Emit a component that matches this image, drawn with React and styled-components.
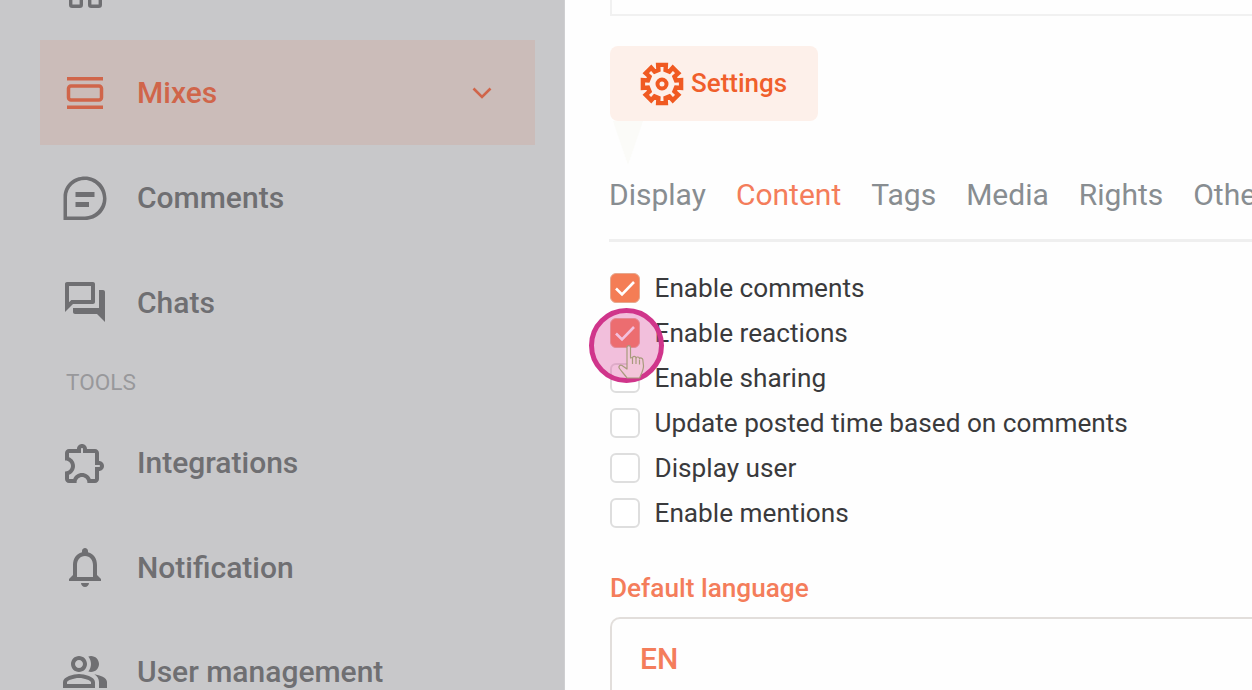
import React from 'react'
import styled, { createGlobalStyle } from 'styled-components'

const Global = createGlobalStyle`
  html, body {
    margin: 0;
    padding: 0;
    height: 690px;
    overflow: hidden;
    background: #fefefe;
  }
  * {
    box-sizing: border-box;
  }
`

const Page = styled.div`
  display: flex;
  position: relative;
  width: 1252px;
  height: 690px;
  overflow: hidden;
  font-family: Roboto, 'Liberation Sans', sans-serif;
`

const Sidebar = styled.aside`
  flex: 0 0 565px;
  height: 690px;
  padding: 0 29px 0 40px;
  overflow: hidden;
  background: #c8c8ca;
  border-right: 1px solid #cfcfd1;
`

const Nav = styled.nav`
  margin-top: -64.3px;
`

const NavRow = styled.div`
  display: flex;
  align-items: center;
  height: 104.67px;
  padding: 0 43px 0 20.5px;
  gap: 28.5px;
  font-size: 30px;
  font-weight: 500;
  color: ${({ $active }) => ($active ? '#d0654a' : '#6f6f72')};
  background: ${({ $active }) => ($active ? '#cbbcb9' : 'transparent')};
`

const NavLabel = styled.span`
  flex: 1;
`

const SectionTitle = styled.div`
  display: flex;
  align-items: center;
  height: 56px;
  padding-left: 26px;
  font-size: 22.6px;
  color: #98989b;
`

const IconBox = styled.svg`
  flex: 0 0 48px;
  width: 48px;
  height: 48px;
  fill: currentColor;
`

const Main = styled.main`
  flex: 1;
  min-width: 0;
  padding-left: 45px;
`

const TopCard = styled.div`
  height: 16px;
  border-left: 2px solid #f1f1f1;
  border-bottom: 2px solid #f1f1f1;
`

const SettingsBadge = styled.div`
  display: flex;
  align-items: center;
  gap: 7px;
  width: 208px;
  height: 75px;
  margin-top: 30px;
  padding: 0 0 2px 30px;
  border-radius: 8px;
  background: #fdf0ea;
  font-size: 26px;
  font-weight: 500;
  color: #f05f2c;

  svg {
    margin-top: 2px;
  }
`

const Pointer = styled.div`
  width: 0;
  height: 0;
  margin-left: 3px;
  border-left: 15px solid transparent;
  border-right: 15px solid transparent;
  border-top: 44px solid #fbfbf8;
`

const Tabs = styled.div`
  display: flex;
  gap: 30px;
  height: 77px;
  margin-left: -1px;
  border-bottom: 3px solid #efefef;
  white-space: nowrap;
  overflow: hidden;
`

const Tab = styled.div`
  height: 77px;
  padding-top: 10px;
  font-size: 30px;
  line-height: 40px;
  font-weight: 400;
  color: ${({ $active }) => ($active ? '#f47d5b' : '#888d91')};
  border-bottom: ${({ $active }) => ($active ? '3px solid #f47d5b' : '3px solid transparent')};
`

const Options = styled.div`
  display: flex;
  flex-direction: column;
  margin-top: 24px;
`

const Option = styled.label`
  display: flex;
  align-items: center;
  gap: 14.5px;
  height: 44.9px;
  font-size: 26.2px;
  color: #3a3a3c;
`

const Box = styled.span`
  display: flex;
  align-items: center;
  justify-content: center;
  width: 30px;
  height: 30px;
  border-radius: 6px;
  background: ${({ $checked }) => ($checked ? '#f47d55' : '#fff')};
  border: ${({ $checked }) => ($checked ? '1px solid #e6a98f' : '2px solid #dedede')};
`

const FieldTitle = styled.div`
  margin-top: 38px;
  font-size: 26.2px;
  line-height: 30px;
  font-weight: 500;
  color: #f47d5b;
`

const Select = styled.div`
  height: 120px;
  margin-top: 14px;
  padding: 20px 28px;
  border: 2px solid #e2dedb;
  border-right: 0;
  border-bottom: 0;
  border-radius: 10px 0 0 0;
  font-size: 30px;
  line-height: 40px;
  font-weight: 500;
  color: #f47d5b;
`

const ClickMark = styled.div`
  position: absolute;
  left: 588.5px;
  top: 307.5px;
  width: 75px;
  height: 75px;
  border-radius: 50%;
  background: rgba(222, 80, 160, 0.36);
  border: 5px solid #d0358b;
`

const Hand = styled.svg`
  position: absolute;
  left: 618px;
  top: 345px;
  width: 27px;
  height: 34px;
`

const DashboardIcon = () => (
  <IconBox viewBox="0 0 48 48">
    <g fill="none" stroke="#6f6f72" strokeWidth="3.4">
      <rect x="9.7" y="26" width="10.6" height="16.300" rx="1.5" />
      <rect x="28.700" y="26" width="10.6" height="16.300" rx="1.5" />
    </g>
  </IconBox>
)

const MixesIcon = () => (
  <IconBox viewBox="0 0 48 48">
    <path d="M6 8h36v3.500H6zM6 36.500h36V40H6z" />
    <rect x="7.500" y="17" width="33" height="14" rx="2.500" fill="none" stroke="currentColor" strokeWidth="3.500" />
  </IconBox>
)

const CommentIcon = () => (
  <IconBox viewBox="0 0 48 48">
    <path
      d="M2.500 47V24C2.500 12 12 3.500 24 3.500S45.500 13 45.500 25.500 36 47 24 47zM6 43.500H24C33.500 43.500 42 35 42 25.500S33.500 7 24 7 6 14 6 24z"
      fillRule="evenodd"
    />
    <path d="M14.500 19h19v5h-19zM14.500 29h13.500v5H14.500z" />
  </IconBox>
)

const ChatsIcon = () => (
  <IconBox viewBox="0 0 24 24">
    <path d="M15 4v7H5.170L4 12.170V4h11m1-2H3c-.550 0-1 .450-1 1v14l4-4h10c.550 0 1-.450 1-1V3c0-.550-.450-1-1-1zm5 4h-2v9H6v2c0 .550.450 1 1 1h11l4 4V7c0-.550-.450-1-1-1z" />
  </IconBox>
)

const PuzzleIcon = () => (
  <IconBox viewBox="0 0 24 24">
    <path d="M10.500 4.500c.280 0 .500.220.500.500v2h6v6h2c.280 0 .500.220.500.500s-.220.500-.500.500h-2v6h-2.120c-.680-1.750-2.390-3-4.380-3s-3.700 1.250-4.380 3H4v-2.120c1.750-.680 3-2.390 3-4.380 0-1.990-1.240-3.700-2.990-4.380L4 7h6V5c0-.280.220-.500.500-.500m0-2C9.120 2.500 8 3.620 8 5H4c-1.100 0-1.990.900-1.990 2v3.800h.290c1.490 0 2.700 1.210 2.700 2.700s-1.210 2.700-2.700 2.700H2V20c0 1.100.900 2 2 2h3.800v-.300c0-1.490 1.210-2.700 2.700-2.700s2.700 1.210 2.700 2.700v.300H17c1.100 0 2-.900 2-2v-4c1.380 0 2.500-1.120 2.500-2.500S20.380 11 19 11V7c0-1.100-.900-2-2-2h-4c0-1.380-1.120-2.500-2.500-2.500z" />
  </IconBox>
)

const BellIcon = () => (
  <IconBox viewBox="0 0 24 24">
    <path d="M12 22c1.100 0 2-.900 2-2h-4c0 1.100.900 2 2 2zm6-6v-5c0-3.070-1.630-5.640-4.500-6.320V4c0-.830-.670-1.500-1.500-1.500s-1.500.670-1.500 1.500v.680C7.640 5.360 6 7.920 6 11v5l-2 2v1h16v-1l-2-2zm-2 1H8v-6c0-2.480 1.510-4.500 4-4.500s4 2.020 4 4.500v6z" />
  </IconBox>
)

const UsersIcon = () => (
  <IconBox viewBox="0 0 24 24">
    <path d="M16.670 13.130C18.040 14.060 19 15.320 19 17v3h4v-3c0-2.180-3.570-3.470-6.330-3.870z" />
    <path d="M15 12c2.210 0 4-1.790 4-4s-1.790-4-4-4c-.470 0-.910.100-1.330.240C14.500 5.270 15 6.580 15 8s-.500 2.730-1.330 3.760c.420.140.860.240 1.330.240z" />
    <path d="M9 12c2.210 0 4-1.790 4-4s-1.790-4-4-4-4 1.790-4 4 1.790 4 4 4zm0-6c1.100 0 2 .900 2 2s-.900 2-2 2-2-.900-2-2 .900-2 2-2z" />
    <path d="M9 13c-2.670 0-8 1.340-8 4v3h16v-3c0-2.660-5.330-4-8-4zm6 5H3v-.990C3.200 16.290 6.300 15 9 15s5.800 1.290 6 2z" />
  </IconBox>
)

const Chevron = () => (
  <svg width="20" height="12" viewBox="0 0 20 12" fill="none" stroke="currentColor" strokeWidth="2.600">
    <path d="M1.500 1.500L10 10l8.500-8.500" />
  </svg>
)

// eight chunky teeth, the outline is worked out from the angles
const gearPath = () => {
  const teeth = 8
  const points = []
  for (let i = 0; i < teeth; i++) {
    const mid = (i * 2 * Math.PI) / teeth
    const offsets = [
      [-0.25, 14.5],
      [-0.2, 19.5],
      [0.2, 19.5],
      [0.25, 14.5],
    ]
    offsets.forEach(([da, r]) => {
      const a = mid + da
      points.push(`${(22 + r * Math.sin(a)).toFixed(2)} ${(22 - r * Math.cos(a)).toFixed(2)}`)
    })
  }
  return `M${points.join('L')}Z`
}

const GearIcon = () => (
  <svg width="44" height="44" viewBox="0 0 44 44" fill="none" stroke="#f05a22" strokeWidth="4.400" strokeLinejoin="miter">
    <path d={gearPath()} />
    <circle cx="22" cy="22" r="4.500" strokeWidth="4" />
  </svg>
)

const CheckMark = () => (
  <svg width="22" height="18" viewBox="0 0 22 18" fill="none" stroke="#fff" strokeWidth="2.600">
    <path d="M2 9.500l6 6L20 3" />
  </svg>
)

const options = [
  ['Enable comments', true],
  ['Enable reactions', true],
  ['Enable sharing', false],
  ['Update posted time based on comments', false],
  ['Display user', false],
  ['Enable mentions', false],
]

const tabs = ['Display', 'Content', 'Tags', 'Media', 'Rights', 'Other']

const App = () => (
  <Page>
    <Global />
    <Sidebar>
      <Nav>
        <NavRow>
          <DashboardIcon />
        </NavRow>
        <NavRow $active>
          <MixesIcon />
          <NavLabel>Mixes</NavLabel>
          <Chevron />
        </NavRow>
        <NavRow>
          <CommentIcon />
          <NavLabel>Comments</NavLabel>
        </NavRow>
        <NavRow>
          <ChatsIcon />
          <NavLabel>Chats</NavLabel>
        </NavRow>
        <SectionTitle>TOOLS</SectionTitle>
        <NavRow>
          <PuzzleIcon />
          <NavLabel>Integrations</NavLabel>
        </NavRow>
        <NavRow>
          <BellIcon />
          <NavLabel>Notification</NavLabel>
        </NavRow>
        <NavRow>
          <UsersIcon />
          <NavLabel>User management</NavLabel>
        </NavRow>
      </Nav>
    </Sidebar>
    <Main>
      <TopCard />
      <SettingsBadge>
        <GearIcon />
        Settings
      </SettingsBadge>
      <Pointer />
      <Tabs>
        {tabs.map(tab => (
          <Tab key={tab} $active={tab === 'Content'}>
            {tab}
          </Tab>
        ))}
      </Tabs>
      <Options>
        {options.map(([label, checked]) => (
          <Option key={label}>
            <Box $checked={checked}>{checked && <CheckMark />}</Box>
            {label}
          </Option>
        ))}
      </Options>
      <FieldTitle>Default language</FieldTitle>
      <Select>EN</Select>
    </Main>
    <ClickMark />
    <Hand viewBox="0 0 27 34" fill="#f3c6da" stroke="#a89a7c" strokeWidth="1.200" strokeLinejoin="round">
      <path d="M9 2.500c0-2.500 3.500-2.500 3.500 0V13l2-.5c.5-1.500 3-1.500 3.500.3 1-1.300 3-1 3.500.7 1-1 3-.5 3.300 1.200l.7 6c.2 4-2.500 9-4 12.300H9C7 30 4 27 1.500 23.500c-1.500-2 .5-4 2.500-3l5 3.500z" />
      <path d="M14.500 12.500V19M18 13V19M21.500 14.500V19.500" fill="none" />
    </Hand>
  </Page>
)

export default App
